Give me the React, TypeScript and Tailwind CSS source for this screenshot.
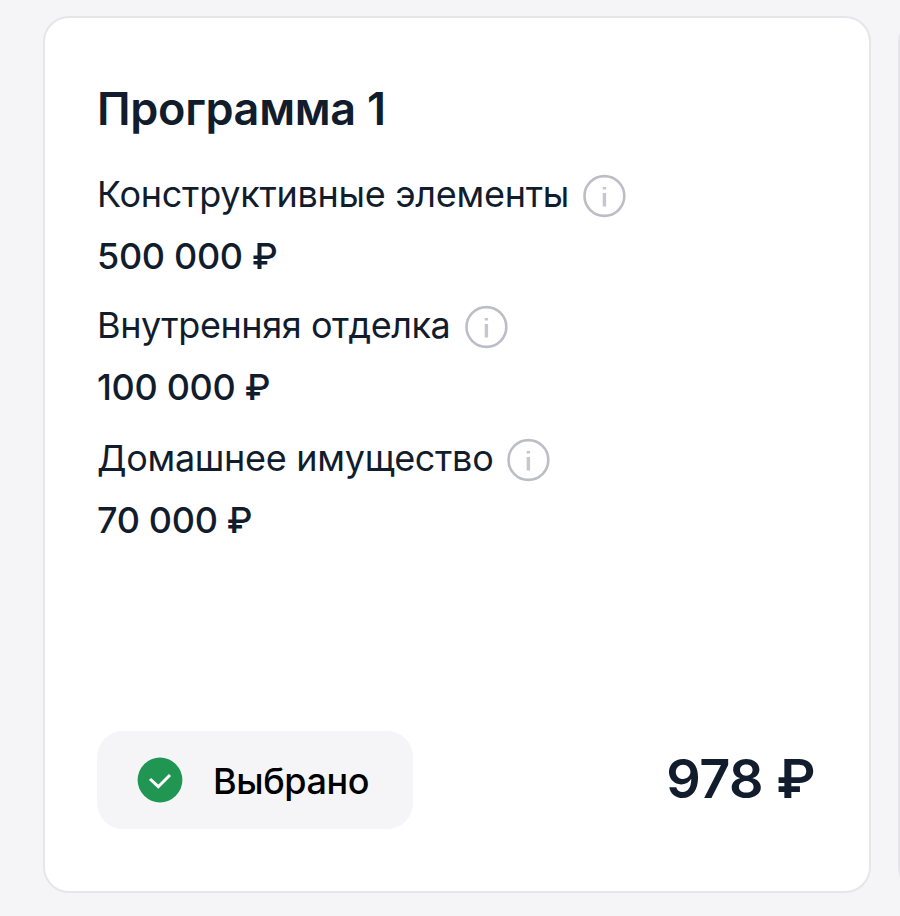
const items = [
  { label: 'Конструктивные элементы', price: '500 000 ₽', rowClass: 'h-[131px]', labelClass: 'w-[472px] tracking-[-0.28px]' },
  { label: 'Внутренняя отделка', price: '100 000 ₽', rowClass: 'h-[133px]', labelClass: 'w-[354px] tracking-[-0.42px]' },
  { label: 'Домашнее имущество', price: '70 000 ₽', rowClass: 'h-[132px]', labelClass: 'w-[396px] tracking-[-0.3px]' },
]

function InfoIcon() {
  return (
    <svg viewBox="0 0 44 44" className="w-11 h-11 shrink-0 mt-[3px]" fill="none">
      <circle cx="22.4" cy="22" r="19.9" stroke="#bdbdc7" strokeWidth={2.6} />
      <path d="M22.4 19v13.5M22.4 13v2.6" stroke="#c6c6cf" strokeWidth={3.4} />
    </svg>
  )
}

export default function App() {
  return (
    <div className="flex w-[900px] h-[916px] overflow-hidden bg-[#f5f5f8] pt-4 pl-[43px] gap-[27px] font-['Inter',sans-serif] text-[#111c2d]">
      <div className="flex flex-col shrink-0 w-[828px] h-[877px] rounded-[26px] border-2 border-[#e6e6ea] bg-white pl-[52px] pr-[54px] pt-[63px] pb-[62px]">
        <h2 className="text-[45px] leading-[56px] font-semibold tracking-[-0.3px] whitespace-nowrap">Программа 1</h2>

        <div className="flex flex-col mt-[26px]">
          {items.map(item => (
            <div key={item.label} className={item.rowClass}>
              <div className="flex items-center h-[62px] gap-[13px]">
                <span className={`text-[36px] whitespace-nowrap shrink-0 ${item.labelClass}`}>{item.label}</span>
                <InfoIcon />
              </div>
              <p className="text-[36px] leading-[62px] font-medium tracking-[-0.33px] whitespace-nowrap">{item.price}</p>
            </div>
          ))}
        </div>

        <div className="flex items-center justify-between mt-auto">
          <button className="flex items-center w-[316px] h-[98px] rounded-[26px] bg-[#f5f5f8] pl-10 gap-[30px] text-[36px] font-medium text-black">
            <svg viewBox="0 0 46 46" className="w-[46px] h-[46px] shrink-0" fill="none">
              <circle cx="23" cy="23" r="22.4" fill="#219653" />
              <path d="M13 22l8.3 7.7L33 18" stroke="white" strokeWidth={3} />
            </svg>
            <span className="tracking-[-0.4px] pt-0.5">Выбрано</span>
          </button>
          <p className="text-[54px] leading-none font-semibold tracking-[-0.5px] whitespace-nowrap pb-[3px]">978 ₽</p>
        </div>
      </div>

      <div className="shrink-0 w-[828px] h-[877px] rounded-[26px] border-2 border-[#e6e6ea] bg-white" />
    </div>
  )
}
